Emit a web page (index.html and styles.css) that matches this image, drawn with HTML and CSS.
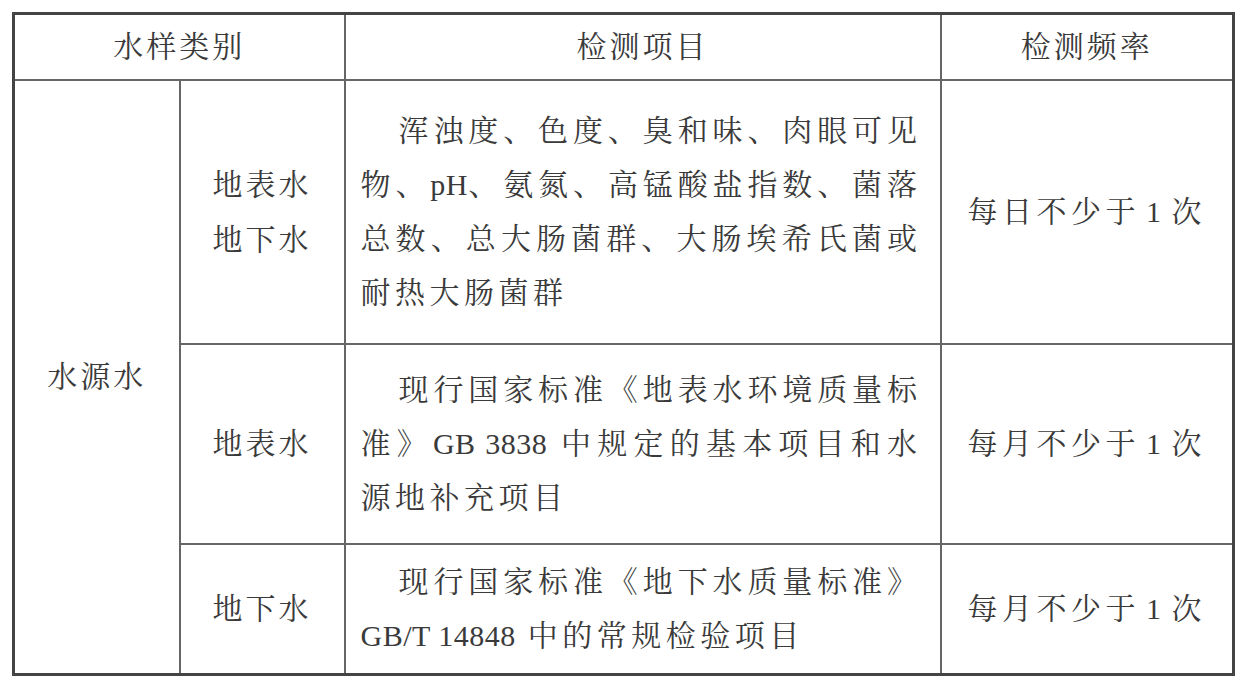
FILE: index.html
```html
<!DOCTYPE html>
<html lang="zh-CN">
<head>
<meta charset="utf-8">
<title>水源水检测项目和频率</title>
<link rel="stylesheet" href="styles.css">
</head>
<body>
<table class="std">
  <colgroup>
    <col class="c1"><col class="c2"><col class="c3"><col class="c4">
  </colgroup>
  <tr class="r-head">
    <th colspan="2">水样类别</th>
    <th>检测项目</th>
    <th>检测频率</th>
  </tr>
  <tr class="r1">
    <td rowspan="3" class="cat">水源水</td>
    <td class="sub"><span class="sl">地表水</span><span class="sl">地下水</span></td>
    <td class="items">
      <span class="ln first">浑浊度、色度、臭和味、肉眼可见</span>
      <span class="ln">物、<span class="lat">pH</span>、氨氮、高锰酸盐指数、菌落</span>
      <span class="ln">总数、总大肠菌群、大肠埃希氏菌或</span>
      <span class="ln end">耐热大肠菌群</span>
    </td>
    <td class="freq">每日不少于 1 次</td>
  </tr>
  <tr class="r2">
    <td class="sub">地表水</td>
    <td class="items">
      <span class="ln first">现行国家标准《地表水环境质量标</span>
      <span class="ln">准》<span class="lat">GB 3838</span> 中规定的基本项目和水</span>
      <span class="ln end">源地补充项目</span>
    </td>
    <td class="freq">每月不少于 1 次</td>
  </tr>
  <tr class="r3">
    <td class="sub">地下水</td>
    <td class="items">
      <span class="ln first">现行国家标准《地下水质量标准》</span>
      <span class="ln end"><span class="lat">GB/T 14848</span> 中的常规检验项目</span>
    </td>
    <td class="freq">每月不少于 1 次</td>
  </tr>
</table>
</body>
</html>
```

FILE: styles.css
```css
html, body {
  margin: 0;
  padding: 0;
  background: #ffffff;
}

body {
  padding: 12px 0 0 12px;
}

.std {
  border-collapse: collapse;
  table-layout: fixed;
  width: 1220px;
  border: 3px solid #444;
  font-family: "Liberation Serif", "Noto Serif CJK SC", "Noto Sans CJK SC", serif;
  font-size: 30px;
  color: #3a3a3a;
  letter-spacing: 3px;
}

.c1 { width: 166px; }
.c2 { width: 165px; }
.c3 { width: 596px; }
.c4 { width: 293px; }

.std th,
.std td {
  border: 2px solid #666;
  padding: 0;
  font-weight: normal;
  text-align: center;
  vertical-align: middle;
}

.r-head { height: 66px; }
.r1 { height: 264px; }
.r2 { height: 200px; }
.r3 { height: 131px; }

.r-head th { line-height: 40px; }

.cat { line-height: 40px; }

.sub { line-height: 55px; }
.sl { display: block; }

.std td.items {
  text-align: left;
  padding: 0 18px 0 15px;
  letter-spacing: 4.5px;
  line-height: 54px;
}

.ln {
  display: block;
  text-align: justify;
  text-align-last: justify;
}

.ln.first { padding-left: 38px; }
.ln.end { text-align-last: left; }

.lat { letter-spacing: 0.5px; }

.freq {
  letter-spacing: 4.5px;
  word-spacing: -6px;
  line-height: 40px;
}
```
